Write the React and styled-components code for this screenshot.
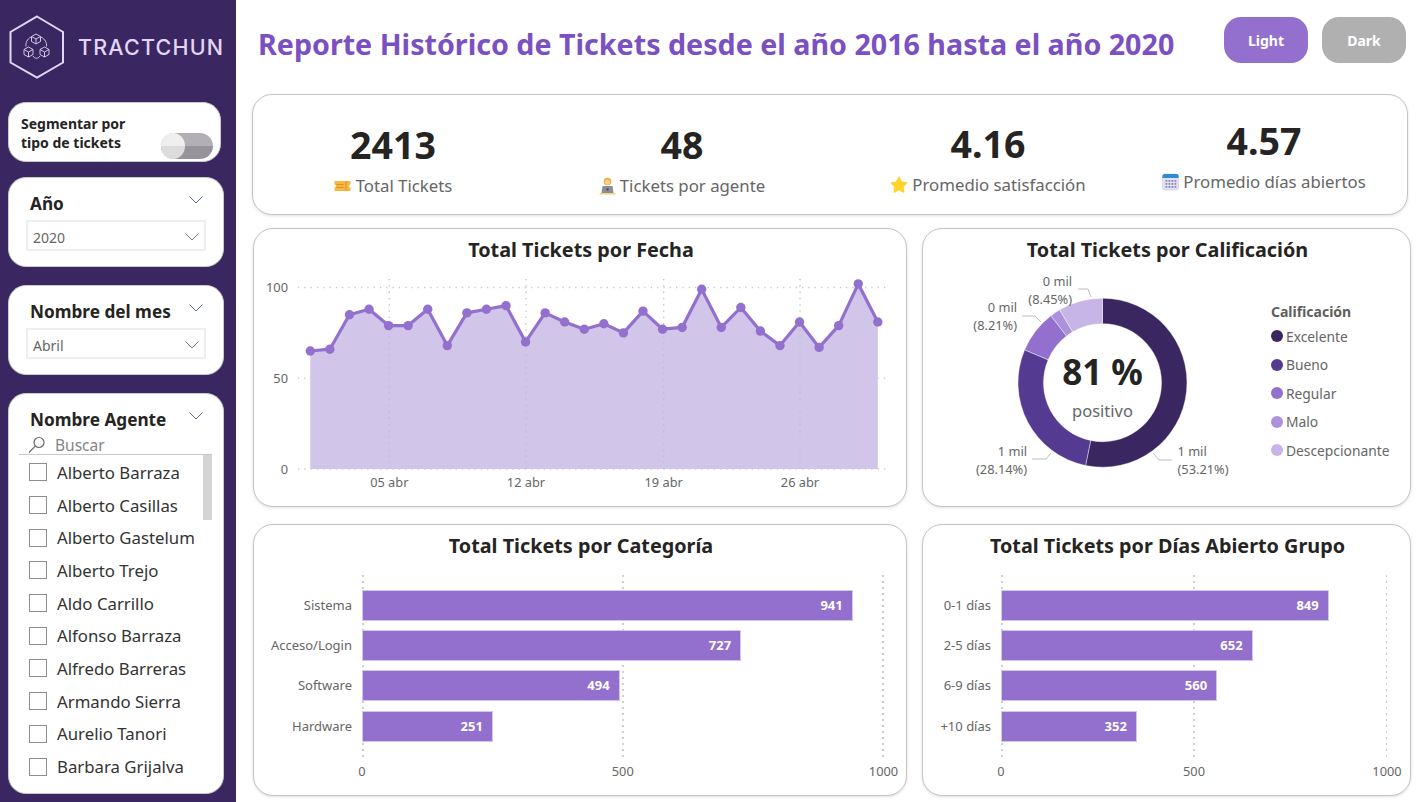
import React from 'react';
import styled, { createGlobalStyle } from 'styled-components';

const GlobalStyle = createGlobalStyle`
  html, body { margin: 0; padding: 0; background: #fff; }
  body { font-family: "Noto Sans", "Open Sans", sans-serif; }
  * { box-sizing: border-box; }
`;

const Page = styled.div`
  display: flex;
  width: 1421px;
  height: 802px;
  overflow: hidden;
  background: #fff;
`;

/* sidebar */
const Sidebar = styled.aside`
  width: 236px;
  flex: none;
  background: #3a2761;
  padding-left: 8px;
`;

const Brand = styled.div`
  display: flex;
  align-items: center;
  height: 102px;
  padding: 0 0 8px 1px;
  gap: 13px;
`;

const BrandName = styled.span`
  font-family: "Inter", sans-serif;
  font-size: 21.5px;
  font-weight: 500;
  letter-spacing: 1.2px;
  color: #e2d6f5;
`;

const SegmentCard = styled.div`
  width: 213px;
  height: 60px;
  margin-bottom: 15px;
  padding: 11px 7px 0 12px;
  background: #fff;
  border: 1px solid #c9c9c9;
  border-radius: 18px;
  display: flex;
  justify-content: space-between;
`;

const SegmentText = styled.div`
  font-size: 14px;
  font-weight: 700;
  line-height: 19px;
  color: #252423;
`;

const Toggle = styled.div`
  position: relative;
  width: 52px;
  height: 26px;
  margin-top: 19px;
  border-radius: 13px;
  background: linear-gradient(#b3b0b5 50%, #96939b 50%);
`;

const ToggleKnob = styled.div`
  position: absolute;
  left: 0;
  top: 0;
  width: 24px;
  height: 26px;
  border-radius: 50%;
  background: linear-gradient(#efefef 50%, #dcdcdc 50%);
`;

const FilterCard = styled.div`
  width: 216px;
  height: ${p => p.$height}px;
  margin-bottom: 18px;
  padding: 12px 17px 0 17px;
  background: #fff;
  border: 1px solid #c9c9c9;
  border-radius: 18px;
`;

const FilterHead = styled.div`
  display: flex;
  justify-content: space-between;
  padding: 0 3px 0 4px;
  height: 27px;
`;

const FilterTitle = styled.div`
  font-size: 17.2px;
  font-weight: 700;
  line-height: 27px;
  color: #252423;
`;

const HeadChevron = styled.svg`
  margin-top: 6px;
  width: 14px;
  height: 8px;
`;

const Dropdown = styled.div`
  display: flex;
  align-items: center;
  justify-content: space-between;
  height: 31px;
  margin-top: 3px;
  padding: 3px 5px 0 5px;
  border: 2px solid #eee;
  font-size: 14px;
  color: #666;
`;

const Search = styled.div`
  display: flex;
  align-items: center;
  gap: 9px;
  height: 19px;
  margin-top: 2px;
  padding-left: 2px;
  font-size: 15.5px;
  color: #858585;
`;

const AgentList = styled.div`
  position: relative;
  margin: 0 -6px 0 -7px;
  padding: 1px 0 0 10px;
  border-top: 1px solid #c8c8c8;
`;

const ScrollThumb = styled.div`
  position: absolute;
  right: 0;
  top: 0;
  width: 9px;
  height: 65px;
  background: #d6d4d2;
`;

const AgentRow = styled.div`
  display: flex;
  align-items: center;
  gap: 10px;
  height: 32.7px;
  font-size: 16.8px;
  color: #333;
  white-space: nowrap;
`;

const CheckBox = styled.span`
  width: 18px;
  height: 18px;
  flex: none;
  border: 1.5px solid #8d8d8d;
  background: #fff;
`;

/* main column */
const Main = styled.main`
  flex: 1;
  padding-left: 16px;
`;

const Header = styled.header`
  display: flex;
  height: 94px;
`;

const Title = styled.h1`
  margin: 23px 0 0 6px;
  font-size: 28.65px;
  line-height: 42px;
  font-weight: 700;
  color: #7b50c2;
  white-space: nowrap;
`;

const Buttons = styled.div`
  display: flex;
  gap: 14px;
  margin: 17px 15px 0 auto;
`;

const ThemeButton = styled.div`
  width: 84px;
  height: 46px;
  border-radius: 17px;
  display: flex;
  align-items: center;
  justify-content: center;
  font-size: 14px;
  font-weight: 700;
  color: #fff;
  background: ${p => (p.$active ? '#9370cd' : '#b0b0b0')};
`;

const Card = styled.section`
  background: #fff;
  border: 1px solid #c4c4c4;
  border-radius: 20px;
  box-shadow: 0 1px 3px rgba(0, 0, 0, 0.12);
`;

const KpiCard = styled(Card)`
  width: 1156px;
  height: 121px;
  display: grid;
  grid-template-columns: 280px 298px 314px 238px;
  margin-bottom: 13px;
`;

const Kpi = styled.div`
  display: flex;
  flex-direction: column;
  align-items: center;
  padding: ${p => p.$top}px 0 0;
`;

const KpiValue = styled.div`
  font-size: 37.5px;
  font-weight: 700;
  line-height: 50px;
  color: #252423;
`;

const KpiLabel = styled.div`
  display: flex;
  align-items: center;
  gap: 4px;
  margin-top: 5px;
  font-size: 16.8px;
  line-height: 22px;
  color: #666;
  white-space: nowrap;
`;

const ChartGrid = styled.div`
  display: grid;
  grid-template-columns: 654px 489px;
  grid-template-rows: 279px 272px;
  column-gap: 15px;
  row-gap: 17px;
  margin-left: 1px;
`;

const ChartTitle = styled.h2`
  margin: 0;
  height: 42px;
  padding-left: 2px;
  font-size: 19.8px;
  line-height: 42px;
  font-weight: 700;
  text-align: center;
  color: #252423;
`;

const Plot = styled.svg`
  display: block;
  flex: none;
`;

const AxisText = styled.text`
  font-size: 12.8px;
  fill: #666;
`;

const DonutBody = styled.div`
  display: flex;
`;

const Legend = styled.div`
  padding: 32px 0 0 9px;
`;

const LegendTitle = styled.div`
  font-size: 14px;
  font-weight: 700;
  line-height: 18px;
  margin-bottom: 1px;
  color: #605e5c;
`;

const LegendItem = styled.div`
  display: flex;
  align-items: center;
  gap: 3px;
  height: 28.5px;
  font-size: 13.8px;
  color: #666;
  white-space: nowrap;
`;

const LegendDot = styled.span`
  width: 12px;
  height: 12px;
  border-radius: 50%;
  background: ${p => p.$color};
`;

/* bar charts */
const BarChart = styled.div`
  display: grid;
  grid-template-columns: ${p => p.$labelWidth}px ${p => p.$plotWidth}px;
  margin-top: 8px;
`;

const BarLabels = styled.div`
  display: flex;
  flex-direction: column;
  gap: 9.4px;
  padding-top: 14.5px;
`;

const BarLabel = styled.div`
  height: 31px;
  padding-right: 10px;
  font-size: 13px;
  line-height: 31px;
  text-align: right;
  color: #666;
  white-space: nowrap;
`;

const BarPlot = styled.div`
  position: relative;
  height: 185px;
  display: flex;
  flex-direction: column;
  gap: 9.4px;
  padding-top: 14.5px;
`;

const GridLayer = styled.div`
  position: absolute;
  inset: 0;
  display: flex;
  justify-content: space-between;
`;

const GridLine = styled.div`
  width: 1.5px;
  height: 100%;
  background: repeating-linear-gradient(#cfcfcf 0 2px, transparent 2px 6px);
`;

const Bar = styled.div`
  position: relative;
  height: 31px;
  padding-right: 9px;
  background: #9370cd;
  border: 1px solid #d3c6ee;
  font-size: 13px;
  font-weight: 700;
  line-height: 29px;
  text-align: right;
  color: #fff;
`;

const AxisRow = styled.div`
  grid-column: 2;
  display: flex;
  justify-content: space-between;
  margin-top: 2px;
`;

const Tick = styled.div`
  width: 0;
  display: flex;
  justify-content: center;
  font-size: 12.8px;
  line-height: 18px;
  color: #666;
`;

const Chevron = ({ w = 14, h = 7 }) => (
  <svg width={w} height={h + 1} viewBox={`0 0 ${w} ${h + 1}`}>
    <polyline points={`0.5,0.5 ${w / 2},${h} ${w - 0.5},0.5`} fill="none" stroke="#6b7a90" strokeWidth="1" />
  </svg>
);

const FilterHeader = ({ title }) => (
  <FilterHead>
    <FilterTitle>{title}</FilterTitle>
    <HeadChevron viewBox="0 0 14 8">
      <polyline points="0.5,0.5 7,7 13.5,0.5" fill="none" stroke="#5b6f8c" strokeWidth="1" />
    </HeadChevron>
  </FilterHead>
);

const Cube = ({ x, y }) => (
  <g transform={`translate(${x} ${y})`}>
    <path d="M0,-5 L4.5,-2.5 L4.5,2.5 L0,5 L-4.5,2.5 L-4.5,-2.5 Z M-4.5,-2.5 L0,0 L4.5,-2.5 M0,0 L0,5" />
  </g>
);

const Logo = () => (
  <svg width="56" height="64" viewBox="9 16 56 64" fill="none" stroke="#e2d6f5">
    <path d="M37,17.5 L63,33 L63,63.5 L37,78.5 L10.5,63.5 L10.5,33 Z" strokeWidth="2" />
    <g strokeWidth="0.9">
      <Cube x={36} y={40} />
      <Cube x={28.5} y={53} />
      <Cube x={44.5} y={53} />
      <path d="M31,38 C27,40 25.5,44 26,47.5 M41,38 C45,40 47,44 46.5,47.5 M33,57 C35,60 38,60 40,57" />
    </g>
  </svg>
);

const TicketIcon = () => (
  <svg width="18" height="16" viewBox="0 0 17 16">
    <path d="M0,3 H16 V6.5 A1.5,1.5 0 0 0 16,9.5 V13 H0 V9.5 A1.5,1.5 0 0 0 0,6.5 Z" fill="#f5b942" />
    <rect x="11" y="3" width="1" height="10" fill="#d9952a" />
    <rect x="2" y="6" width="7" height="1" fill="#d9952a" />
    <rect x="2" y="9" width="7" height="1" fill="#d9952a" />
  </svg>
);

const AgentIcon = () => (
  <svg width="17" height="19" viewBox="0 0 16 19">
    <circle cx="8" cy="4.5" r="3.8" fill="#f3a93c" />
    <circle cx="8" cy="5" r="2.6" fill="#f8d08c" />
    <path d="M2,16 L3,9 H13 L14,16 Z" fill="#8f8d94" />
    <rect x="7" y="11.5" width="2" height="2" fill="#4a3a66" />
    <rect x="0" y="16" width="16" height="1.5" fill="#f6d27a" />
  </svg>
);

const StarIcon = () => (
  <svg width="18" height="18" viewBox="0 0 18 18">
    <path d="M9,1.5 L11.4,6.2 L16.6,7 L12.8,10.7 L13.7,16 L9,13.4 L4.3,16 L5.2,10.7 L1.4,7 L6.6,6.2 Z" fill="#ffd42a" stroke="#ffd42a" strokeWidth="1.6" strokeLinejoin="round" />
  </svg>
);

const CalendarIcon = () => (
  <svg width="17" height="18" viewBox="0 0 17 18">
    <rect x="0.5" y="1" width="16" height="16" rx="2" fill="#e4e2f2" stroke="#cfcde0" strokeWidth="0.6" />
    <path d="M0.5,5 V3 A2,2 0 0 1 2.5,1 H14.5 A2,2 0 0 1 16.5,3 V5 Z" fill="#2e8bd6" />
    {[7, 10, 13].map(y => [3.5, 6.5, 9.5, 12.5].map(x => (
      <rect key={`${x}-${y}`} x={x} y={y} width="1.8" height="1.8" fill="#8a84b8" />
    )))}
  </svg>
);

const LensIcon = () => (
  <svg width="18" height="18" viewBox="0 0 18 18" fill="none" stroke="#6a6a6a" strokeWidth="1.2">
    <circle cx="11" cy="6.5" r="5" />
    <line x1="7.3" y1="10.2" x2="1" y2="16.5" />
  </svg>
);

const lineValues = [65, 66, 85, 88, 79, 79, 88, 68, 86, 88, 90, 70, 86, 81, 77, 80, 75, 87, 77, 78, 99, 78, 89, 76, 68, 81, 67, 79, 102, 81];
const lineX = i => 310.3 + i * 19.57;
const lineY = v => 469 - v * 1.815;

const LineChart = () => {
  const points = lineValues.map((v, i) => `${lineX(i).toFixed(1)},${lineY(v).toFixed(1)}`).join(' ');
  return (
    <Plot width="652" height="235" viewBox="254 271 652 235">
      {[100, 50, 0].map(v => (
        <g key={v}>
          <line x1="298" x2="890" y1={lineY(v)} y2={lineY(v)} stroke="#c8c8c8" strokeWidth="1.3" strokeDasharray="1.3 5" />
          <AxisText x="288" y={lineY(v) + 4.5} textAnchor="end">{v}</AxisText>
        </g>
      ))}
      <polygon points={`310.3,469 ${points} 877.8,469`} fill="#d1c5ea" />
      {[['05 abr', 389.3], ['12 abr', 526], ['19 abr', 663.7], ['26 abr', 800]].map(([label, x]) => (
        <g key={label}>
          <line x1={x} x2={x} y1="279" y2="469" stroke="#bdbdbd" strokeWidth="1.3" strokeDasharray="1.3 5" />
          <AxisText x={x} y="487" textAnchor="middle">{label}</AxisText>
        </g>
      ))}
      <polyline points={points} fill="none" stroke="#9370cd" strokeWidth="3.2" strokeLinejoin="round" />
      {lineValues.map((v, i) => (
        <circle key={i} cx={lineX(i)} cy={lineY(v)} r="4.7" fill="#9370cd" />
      ))}
    </Plot>
  );
};

const ratings = [
  { name: 'Excelente', share: 53.21, color: '#3a2761' },
  { name: 'Bueno', share: 28.14, color: '#553a91' },
  { name: 'Regular', share: 8.21, color: '#9370cd' },
  { name: 'Malo', share: 1.99, color: '#ae91dc' },
  { name: 'Descepcionante', share: 8.45, color: '#c8b5e8' },
];

const DONUT = { cx: 1102.5, cy: 382.7, outer: 84.5, inner: 59 };

const arcPath = (from, to) => {
  const pt = (pct, r) => {
    const a = (pct / 100) * 2 * Math.PI;
    return `${(DONUT.cx + r * Math.sin(a)).toFixed(2)},${(DONUT.cy - r * Math.cos(a)).toFixed(2)}`;
  };
  const large = to - from > 50 ? 1 : 0;
  return `M${pt(from, DONUT.outer)} A${DONUT.outer},${DONUT.outer} 0 ${large} 1 ${pt(to, DONUT.outer)} L${pt(to, DONUT.inner)} A${DONUT.inner},${DONUT.inner} 0 ${large} 0 ${pt(from, DONUT.inner)} Z`;
};

const donutLabels = [
  { x: 1072, y: 286, anchor: 'end', lines: ['0 mil', '(8.45%)'] },
  { x: 1017, y: 312, anchor: 'end', lines: ['0 mil', '(8.21%)'] },
  { x: 1027, y: 456, anchor: 'end', lines: ['1 mil', '(28.14%)'] },
  { x: 1177.5, y: 456, anchor: 'start', lines: ['1 mil', '(53.21%)'] },
];

const leaders = [
  '1078,289 1088,289 1091,297',
  '1022,316 1035,316 1041,322',
  '1032,459 1046,459 1051,453',
  '1172,460 1159,460 1153,453',
];

const DonutChart = () => {
  let start = 0;
  return (
    <Plot width="339" height="235" viewBox="923 271 339 235">
      {ratings.map(r => {
        const from = start;
        start += r.share;
        return <path key={r.name} d={arcPath(from, start)} fill={r.color} stroke="#fff" strokeWidth="0.4" />;
      })}
      {leaders.map(points => (
        <polyline key={points} points={points} fill="none" stroke="#bdbdbd" strokeWidth="1" />
      ))}
      {donutLabels.map(label => (
        <AxisText key={label.lines[1]} x={label.x} y={label.y} textAnchor={label.anchor}>
          <tspan x={label.x}>{label.lines[0]}</tspan>
          <tspan x={label.x} dy="18">{label.lines[1]}</tspan>
        </AxisText>
      ))}
      <text x={DONUT.cx} y="385" textAnchor="middle" fontSize="35" fontWeight="700" fill="#252423">81 %</text>
      <text x={DONUT.cx} y="417" textAnchor="middle" fontSize="16.5" fill="#666">positivo</text>
    </Plot>
  );
};

const Bars = ({ rows, labelWidth, plotWidth }) => (
  <BarChart $labelWidth={labelWidth} $plotWidth={plotWidth}>
    <BarLabels>
      {rows.map(([label]) => <BarLabel key={label}>{label}</BarLabel>)}
    </BarLabels>
    <BarPlot>
      <GridLayer><GridLine /><GridLine /><GridLine /></GridLayer>
      {rows.map(([label, value]) => (
        <Bar key={label} style={{ width: `${value / 10}%` }}>{value}</Bar>
      ))}
    </BarPlot>
    <AxisRow>
      {[0, 500, 1000].map(t => <Tick key={t}>{t}</Tick>)}
    </AxisRow>
  </BarChart>
);

const agents = ['Alberto Barraza', 'Alberto Casillas', 'Alberto Gastelum', 'Alberto Trejo', 'Aldo Carrillo', 'Alfonso Barraza', 'Alfredo Barreras', 'Armando Sierra', 'Aurelio Tanori', 'Barbara Grijalva'];

const kpis = [
  { value: '2413', label: 'Total Tickets', icon: <TicketIcon />, top: 25 },
  { value: '48', label: 'Tickets por agente', icon: <AgentIcon />, top: 25 },
  { value: '4.16', label: 'Promedio satisfacción', icon: <StarIcon />, top: 24 },
  { value: '4.57', label: 'Promedio días abiertos', icon: <CalendarIcon />, top: 21 },
];

export default function App() {
  return (
    <Page>
      <GlobalStyle />
      <Sidebar>
        <Brand>
          <Logo />
          <BrandName>TRACTCHUN</BrandName>
        </Brand>
        <SegmentCard>
          <SegmentText>Segmentar por<br />tipo de tickets</SegmentText>
          <Toggle><ToggleKnob /></Toggle>
        </SegmentCard>
        <FilterCard $height={90}>
          <FilterHeader title="Año" />
          <Dropdown>2020<Chevron /></Dropdown>
        </FilterCard>
        <FilterCard $height={90}>
          <FilterHeader title="Nombre del mes" />
          <Dropdown>Abril<Chevron /></Dropdown>
        </FilterCard>
        <FilterCard $height={401}>
          <FilterHeader title="Nombre Agente" />
          <Search><LensIcon />Buscar</Search>
          <AgentList>
            <ScrollThumb />
            {agents.map(name => (
              <AgentRow key={name}><CheckBox />{name}</AgentRow>
            ))}
          </AgentList>
        </FilterCard>
      </Sidebar>
      <Main>
        <Header>
          <Title>Reporte Histórico de Tickets desde el año 2016 hasta el año 2020</Title>
          <Buttons>
            <ThemeButton $active>Light</ThemeButton>
            <ThemeButton>Dark</ThemeButton>
          </Buttons>
        </Header>
        <KpiCard>
          {kpis.map(k => (
            <Kpi key={k.label} $top={k.top}>
              <KpiValue>{k.value}</KpiValue>
              <KpiLabel>{k.icon}{k.label}</KpiLabel>
            </Kpi>
          ))}
        </KpiCard>
        <ChartGrid>
          <Card>
            <ChartTitle>Total Tickets por Fecha</ChartTitle>
            <LineChart />
          </Card>
          <Card>
            <ChartTitle>Total Tickets por Calificación</ChartTitle>
            <DonutBody>
              <DonutChart />
              <Legend>
                <LegendTitle>Calificación</LegendTitle>
                {ratings.map(r => (
                  <LegendItem key={r.name}><LegendDot $color={r.color} />{r.name}</LegendItem>
                ))}
              </Legend>
            </DonutBody>
          </Card>
          <Card>
            <ChartTitle>Total Tickets por Categoría</ChartTitle>
            <Bars labelWidth={108} plotWidth={521.5} rows={[['Sistema', 941], ['Acceso/Login', 727], ['Software', 494], ['Hardware', 251]]} />
          </Card>
          <Card>
            <ChartTitle>Total Tickets por Días Abierto Grupo</ChartTitle>
            <Bars labelWidth={78} plotWidth={386} rows={[['0-1 días', 849], ['2-5 días', 652], ['6-9 días', 560], ['+10 días', 352]]} />
          </Card>
        </ChartGrid>
      </Main>
    </Page>
  );
}
